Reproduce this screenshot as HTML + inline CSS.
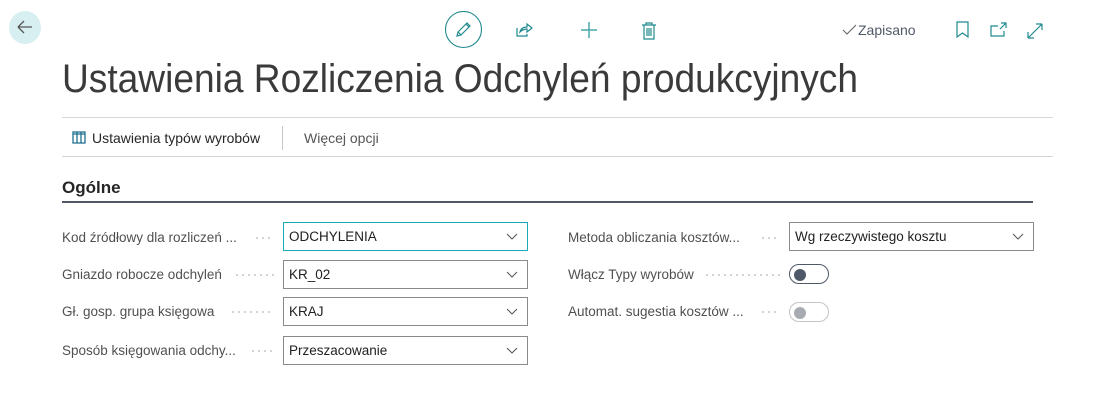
<!DOCTYPE html>
<html><head><meta charset="utf-8"><style>
*{margin:0;padding:0;box-sizing:border-box}
body{width:1102px;height:404px;background:#fff;font-family:"Liberation Sans",sans-serif;position:relative;overflow:hidden;color:#212121}
.a{position:absolute}
.lbl{position:absolute;font-size:13.5px;color:#505050;white-space:nowrap}
.dots{position:absolute;height:2px;background:radial-gradient(circle,#c4c4c4 0.8px,transparent 1px) 0 0/6px 2px repeat-x}
.inp{position:absolute;height:29px;border:1px solid #8a8a8a;font-size:13.5px;color:#212121;padding:6px 5px;background:#fff}
.inp svg{position:absolute;right:9px;top:10px}
.tg{position:absolute;width:40px;height:20px;border:1px solid #505868;border-radius:10px}
.tg i{position:absolute;left:4px;top:4px;width:12px;height:12px;border-radius:50%;background:#4f5868}
</style></head><body>
<div class="a" style="left:9px;top:11px;width:32px;height:33px;border-radius:50%;background:#d8eff2"></div>
<svg class="a" style="left:15px;top:17px" width="20" height="20"><path d="M3 10H17M3 10L9 4M3 10L9 16" stroke="#555" stroke-width="1.3" fill="none"/></svg>
<svg class="a" style="left:444px;top:11px" width="40" height="40"><circle cx="19.5" cy="18.5" r="18" stroke="#1f8a8f" stroke-width="1.1" fill="none"/><path d="M13 25L14 21L23 12L26 15L17 24ZM22 13L25 16M14 21L17 24" stroke="#1f8a8f" stroke-width="1.2" fill="none"/></svg>
<svg class="a" style="left:515px;top:21px" width="20" height="18"><path d="M2 7V15H12V13M5 11C6 7 9 6 12 6V3L17 7L12 11V8C9 8 7 9 5 11Z" stroke="#1f8a8f" stroke-width="1.2" fill="none"/></svg>
<svg class="a" style="left:579px;top:21px" width="20" height="18"><path d="M10 1V17M2 9H18" stroke="#4aa8ac" stroke-width="1.5"/></svg>
<svg class="a" style="left:640px;top:21px" width="18" height="20"><path d="M2 4H16M6 4V2H12V4M4 4V18H14V4M7 7V15M9 7V15M11 7V15" stroke="#1f8a8f" stroke-width="1.2" fill="none"/></svg>
<svg class="a" style="left:842px;top:23px" width="16" height="14"><path d="M1 7L5 11L14 2" stroke="#666" stroke-width="1.1" fill="none"/></svg>
<div class="a" style="left:858px;top:22px;font-size:14px;color:#505868">Zapisano</div>
<svg class="a" style="left:956px;top:21px" width="14" height="18"><path d="M1 1H12V16L6.5 12L1 16Z" stroke="#1f8a8f" stroke-width="1.2" fill="none"/></svg>
<svg class="a" style="left:990px;top:21px" width="18" height="18"><path d="M8 5H1V15H14V10M11 2H16V7M16 2L10 8" stroke="#1f8a8f" stroke-width="1.2" fill="none"/></svg>
<svg class="a" style="left:1026px;top:22px" width="18" height="18"><path d="M2 16L16 2M2 16V10M2 16H8M16 2H10M16 2V8" stroke="#1f8a8f" stroke-width="1.2" fill="none"/></svg>
<svg class="a" style="left:60px;top:55px" width="820" height="50"><text x="2" y="37" font-family="Liberation Sans" font-size="40" fill="#3a3a3a" textLength="796" lengthAdjust="spacingAndGlyphs">Ustawienia Rozliczenia Odchyleń produkcyjnych</text></svg>
<div class="a" style="left:62px;top:117px;width:991px;height:1px;background:#d6d6d6"></div>
<div class="a" style="left:62px;top:156px;width:991px;height:1px;background:#d6d6d6"></div>
<svg class="a" style="left:72px;top:131px" width="15" height="13"><path d="M1 1H13V12H1ZM5 1V12M9 1V12M1 3H13" stroke="#1f6f8f" stroke-width="1.3" fill="none"/></svg>
<div class="a" style="left:92px;top:130px;font-size:14px;color:#262626">Ustawienia typów wyrobów</div>
<div class="a" style="left:282px;top:126px;width:1px;height:24px;background:#c8c8c8"></div>
<div class="a" style="left:304px;top:130px;font-size:14px;color:#555">Więcej opcji</div>
<div class="a" style="left:62px;top:178px;font-size:17px;font-weight:bold;color:#262626">Ogólne</div>
<div class="a" style="left:62px;top:201px;width:971px;height:2px;background:#505868"></div>

<div class="lbl" style="left:62px;top:230px">Kod źródłowy dla rozliczeń ...</div><div class="dots" style="left:254px;top:237px;width:20px"></div>
<div class="inp" style="left:283px;top:222px;width:245px;border:1px solid #1aaab5">ODCHYLENIA<svg width="12" height="8"><path d="M1 1L6 6L11 1" stroke="#555" fill="none"/></svg></div>
<div class="lbl" style="left:62px;top:267px">Gniazdo robocze odchyleń</div><div class="dots" style="left:234px;top:274px;width:40px"></div>
<div class="inp" style="left:283px;top:260px;width:245px">KR_02<svg width="12" height="8"><path d="M1 1L6 6L11 1" stroke="#555" fill="none"/></svg></div>
<div class="lbl" style="left:62px;top:304px">Gł. gosp. grupa księgowa</div><div class="dots" style="left:230px;top:311px;width:44px"></div>
<div class="inp" style="left:283px;top:297px;width:245px">KRAJ<svg width="12" height="8"><path d="M1 1L6 6L11 1" stroke="#555" fill="none"/></svg></div>
<div class="lbl" style="left:62px;top:343px">Sposób księgowania odchy...</div><div class="dots" style="left:250px;top:350px;width:24px"></div>
<div class="inp" style="left:283px;top:336px;width:245px">Przeszacowanie<svg width="12" height="8"><path d="M1 1L6 6L11 1" stroke="#555" fill="none"/></svg></div>

<div class="lbl" style="left:568px;top:230px">Metoda obliczania kosztów...</div><div class="dots" style="left:760px;top:237px;width:20px"></div>
<div class="inp" style="left:789px;top:222px;width:245px">Wg rzeczywistego kosztu<svg width="12" height="8"><path d="M1 1L6 6L11 1" stroke="#555" fill="none"/></svg></div>
<div class="lbl" style="left:568px;top:267px">Włącz Typy wyrobów</div><div class="dots" style="left:704px;top:274px;width:76px"></div>
<div class="tg" style="left:789px;top:264px"><i></i></div>
<div class="lbl" style="left:568px;top:304px">Automat. sugestia kosztów ...</div><div class="dots" style="left:760px;top:311px;width:20px"></div>
<div class="tg" style="left:789px;top:302px;border-color:#c4c4c4"><i style="background:#a8abb2"></i></div>
</body></html>
